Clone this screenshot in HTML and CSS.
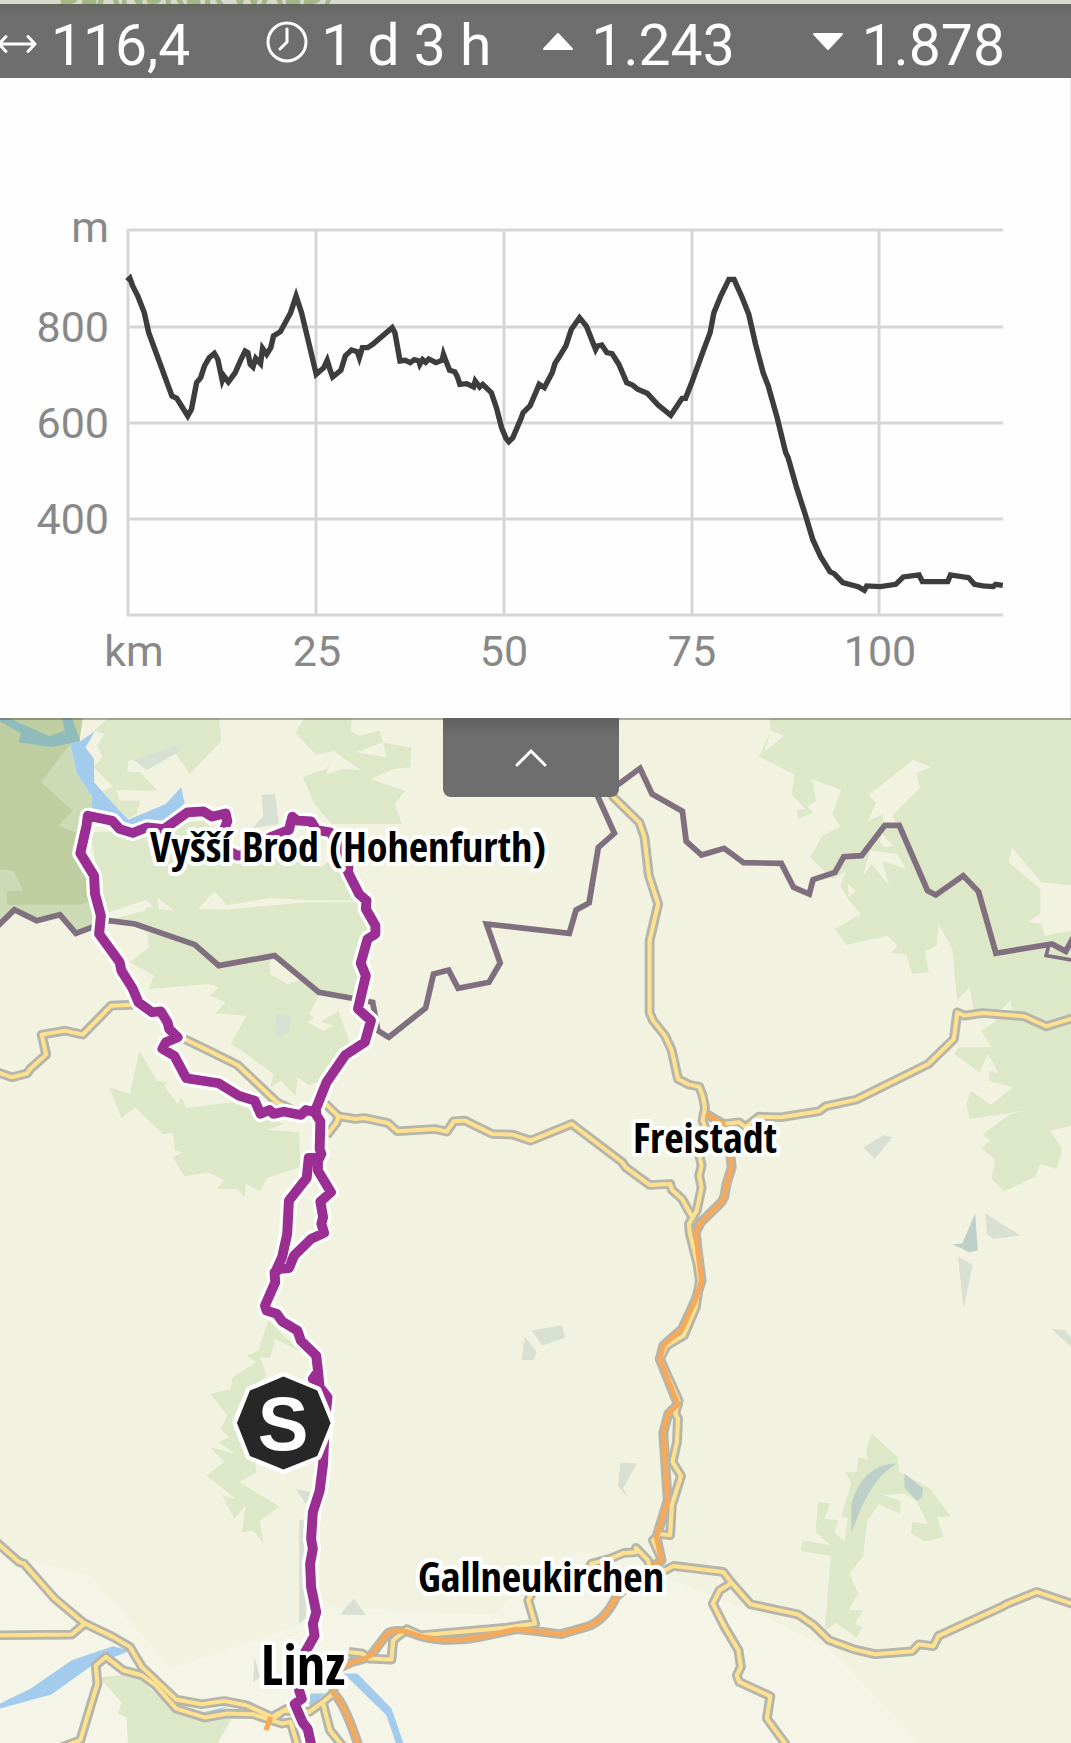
FILE: index.html
```html
<!DOCTYPE html>
<html lang="de">
<head>
    <meta charset="UTF-8">
    <meta name="viewport" content="width=device-width, initial-scale=1.0">
    <title>Tour</title>
    <link rel="stylesheet" href="styles.css">
</head>
<body>
    <div class="map-strip"><span>BLANSKER WALD/</span></div>

    <header class="stats">
      <div class="stat">
        <svg class="icon" viewBox="0 0 42 42"><path d="M3 23H39M10 15.500L3 23L10 30.500M32 15.500L39 23L32 30.500"/></svg>
        <span>116,4</span>
      </div>
      <div class="stat">
        <svg class="icon" viewBox="0 0 42 42"><circle cx="21" cy="21" r="19"/><path d="M21 8V21L14 28"/></svg>
        <span>1 d 3 h</span>
      </div>
      <div class="stat">
        <svg class="icon solid" viewBox="0 0 42 42"><path d="M21 13L35 28H7Z"/></svg>
        <span>1.243</span>
      </div>
      <div class="stat">
        <svg class="icon solid" viewBox="0 0 42 42"><path d="M7 13H35L21 28Z"/></svg>
        <span>1.878</span>
      </div>
    </header>

    <section class="profile">
      <svg viewBox="0 -1 1071 640">
        <g class="grid">
          <path d="M127 151H1003M128 248H1003M128 344H1003M128 440H1003M127 536H1003"/>
          <path d="M128 151V536M316 151V536M504 151V536M692 151V536M879 151V536"/>
        </g>
        <g class="y-labels">
          <text x="109" y="163">m</text>
          <text x="109" y="263">800</text>
          <text x="109" y="359">600</text>
          <text x="109" y="455">400</text>
        </g>
        <g class="x-labels">
          <text x="134" y="587">km</text>
          <text x="317" y="587">25</text>
          <text x="504" y="587">50</text>
          <text x="692" y="587">75</text>
          <text x="880" y="587">100</text>
        </g>
        <polyline class="elevation" transform="translate(0 122) scale(.3419 .3333)" points="372,240 380,232 388,255 403,285 422,335 435,395 460,465 485,535 503,585 517,592 549,645 560,625 575,545 587,530 598,495 612,470 627,457 637,475 650,538 655,525 668,543 688,515 705,475 717,450 725,455 732,490 740,498 748,472 762,488 768,442 780,460 792,440 800,405 820,392 850,335 866,285 882,335 925,520 947,500 957,478 965,505 973,528 997,508 1010,465 1028,447 1045,452 1051,470 1060,440 1075,440 1090,430 1147,380 1155,395 1170,480 1185,478 1200,485 1212,476 1225,480 1228,490 1236,476 1245,484 1254,474 1275,485 1293,478 1297,460 1302,474 1315,508 1330,512 1338,528 1345,550 1365,548 1385,558 1390,540 1403,558 1412,550 1437,575 1452,620 1467,680 1480,712 1488,722 1500,710 1525,650 1530,635 1550,615 1567,575 1577,550 1592,560 1615,515 1623,488 1640,460 1655,435 1671,385 1695,350 1715,375 1742,445 1747,435 1760,432 1775,455 1790,458 1810,490 1833,545 1850,552 1865,565 1893,577 1925,612 1962,643 1995,592 2005,592 2025,540 2055,455 2077,395 2088,335 2108,285 2132,235 2147,235 2170,288 2190,340 2210,430 2232,515 2247,555 2273,650 2298,755 2305,770 2330,860 2355,940 2377,1015 2400,1067 2428,1113 2440,1118 2465,1145 2510,1157 2528,1168 2535,1155 2575,1157 2620,1150 2642,1128 2688,1122 2698,1142 2772,1142 2780,1122 2833,1130 2850,1150 2875,1155 2905,1157 2912,1150 2933,1153"/>
      </svg>
    </section>

    <main class="map">
      <button class="map-toggle" type="button" aria-label="Profil schließen">
        <svg viewBox="0 0 32 20"><path d="M2 17L16 3L30 17"/></svg>
      </button>
      <svg class="map-canvas" viewBox="0 0 1071 1025">
        <defs>
          <!-- yellow roads, used for casing and fill -->
          <g id="roads">
            <path d="M-10 1114L35 1130L80 1118L88 1105L135 1062L122 1002L190 990L242 1002L325 915L390 912"/>
            <path d="M540 1015L610 1050L695 1093L810 1205L860 1230"/>
            <path d="M945 1202L990 1247L1040 1255L1065 1252L1135 1267L1162 1292L1272 1285L1307 1293L1327 1262L1360 1260L1440 1300L1500 1302L1552 1320L1672 1270L1820 1385L1830 1400L1900 1453L1960 1450L1965 1467L1995 1495L2023 1547"/>
            <path d="M990 1247L985 1265L955 1305"/>
            <path d="M1780 260L1795 290L1870 365L1885 410L1898 525L1925 610L1900 720V935L1910 960L1945 1005L1965 1050L1983 1135L2015 1152L2045 1158L2055 1185L2062 1220L2055 1260L2070 1300L2045 1360L2052 1395L2045 1425L2052 1460L2038 1530L2015 1570L2018 1600L2040 1690L2047 1740L2035 1820L2000 1905L1950 1935L1930 1975L1985 2100L1975 2139L1983 2154L1980 2224L1967 2284L1992 2326L1965 2414L1960 2504L1930 2500L1910 2519L1935 2575"/>
            <path d="M2065 1240L2115 1270L2162 1265L2180 1280L2220 1248L2285 1250L2395 1232L2415 1217L2505 1197L2715 1090L2790 1015L2800 935L2820 945L2875 937L2995 947L3060 977L3140 952"/>
            <path d="M1725 2600L1730 2589L1785 2574L1825 2557L1860 2555L1860 2542L1895 2579L1905 2610L1945 2609L1970 2596L2115 2614L2140 2647L2195 2711L2335 2742L2380 2774L2425 2819L2500 2847L2560 2861L2668 2852L2687 2831L2730 2837L2745 2806L2930 2719L2945 2710L3032 2674L3140 2711"/>
            <path d="M2140 2647L2105 2669L2085 2709L2120 2780L2160 2849L2167 2899L2155 2924L2162 2944L2253 2987L2243 3054L2300 3134"/>
            <path d="M-10 2525L55 2584L70 2589L160 2694L245 2767L330 2809L380 2839L415 2899L515 2997L590 3011L655 3001L720 3014L795 3049L840 3024L870 3014"/>
            <path d="M-10 2804L210 2802L248 2769"/>
            <path d="M180 3140L235 3119L270 2999L285 2949L280 2895L310 2869L360 2909L415 2924L455 2954L515 3024L600 3051L665 3039L740 3041L825 3069L850 3064L870 3134"/>
            <path d="M800 3055L830 3030L905 3034L945 3004L980 2974"/>
            <path d="M945 3009L965 3089L1005 3140"/>
            <path d="M1020 2854L1060 2859L1080 2874L1145 2877L1150 2819L1190 2786L1230 2804L1475 2782L1565 2769L1545 2699L1560 2670"/>
          </g>
          <g id="motorway">
            <path d="M2065 1240L2115 1270L2115 1310L2135 1350L2140 1400L2125 1450L2118 1490L2110 1505L2050 1565L2035 1595L2042 1660L2052 1740L2035 1795L1995 1885L1940 1935L1930 1975L1970 2079L1983 2111L1955 2139L1940 2197L1953 2399L1920 2509L1935 2579L1870 2625L1802 2689Q1770 2760 1715 2779L1640 2801L1565 2791L1510 2786L1400 2810Q1310 2828 1230 2807Q1165 2780 1135 2797L1085 2864Q1060 2880 1030 2884L980 2909L975 2979Q1005 3000 1050 3140"/>
          </g>
          <path id="route-line" d="M925 1235L895 1228L880 1243L830 1233L800 1240L788 1228L762 1240L745 1200L700 1186L640 1148L545 1133L510 1066L475 1045L485 1025L520 1010L495 985L490 965L470 932L445 935L405 905L387 862L355 810L350 785L290 700L295 645L278 580L275 525L235 458L253 375L257 345L328 360L350 385L388 397L430 380L480 385L548 335L595 332L620 348L660 338L665 362L650 400L650 440L695 465L745 455L790 410L845 388L855 348L870 360L910 362L925 388L965 395L1000 440L1020 480L1018 515L1050 580L1072 600L1070 625L1098 675V700L1075 715L1055 788L1070 825L1047 925L1085 960L1067 1025L1010 1063L955 1145L920 1235L937 1262L935 1345L940 1360L930 1380V1410L968 1475L937 1503L945 1550L940 1570L948 1597L910 1615L860 1665L845 1703L820 1705L803 1715L805 1745L775 1815L780 1830L810 1840L825 1862L870 1890L880 1920L925 1965L930 2010L935 2060L958 2090L950 2170L945 2289L935 2370L915 2435L910 2515L915 2545L907 2590L910 2660L925 2735L915 2770L920 2805L890 2860L870 2920L875 2970L883 2995L862 3010L885 3065L900 3085L912 3140M935 1372H903L897 1432L845 1500L840 1600L825 1670L805 1715M925 2020L915 2035L950 2085"/>
        </defs>

        <g transform="scale(.3419 .3333) translate(0 -52)">
          <path class="lowland" d="M0 2559L260 2624L500 2904L890 2769L950 2719L1450 2744L1570 2600L1700 2555L1900 2570L1965 2640L2240 2750L2430 2850L2700 3140H0Z"/>

          <!-- forests -->
          <g class="forest">
            <path d="M320 50H640L648 120L555 220L515 160L375 180L372 212L410 215L460 270L340 268L350 300L410 300L400 340L370 355L300 270L330 260L275 200L300 170L285 135L305 100L275 90Z"/>
            <path d="M890 50H1030L1025 90L1050 105L1110 90L1120 125L1203 142L1200 200L1150 205L1085 235L1185 270L1155 310L1175 370H970L920 310L885 228L955 205L980 150L925 162L865 98Z"/>
            <path d="M265 395L420 390L500 370L600 360L660 440L860 480L940 500L1000 450L1060 600L900 598L790 592L600 625L460 630L430 600L300 640Z"/>
            <path d="M320 655L430 620L680 625L900 605L1050 605L1098 690L1060 790L1040 890L930 875L805 760L640 795L570 732Z"/>
            <path d="M430 695L570 732L640 795L790 775V820L840 850L900 830L905 860L940 870L905 940L935 965L990 930L1030 1050L960 1130L905 1153L870 1130L865 1187L820 1140L790 1160L800 1120L720 1060L675 1030L720 945L630 938L660 905L615 885L640 860L610 850L435 865L450 825L380 785L435 740Z"/>
            <path d="M408 1050L460 1140L490 1145L480 1155L520 1210L530 1190L545 1222L680 1205L830 1270L780 1288L875 1295L878 1400L780 1432L760 1472L720 1450L715 1490L695 1465L635 1465L655 1440L610 1415L540 1428L505 1370L535 1355L512 1350L505 1297L475 1300L395 1220L355 1252L320 1160L380 1180Z"/>
            <path d="M785 1860L875 1950L805 1915L790 1972L760 1970L780 2025L720 2080L750 2315L700 2345L818 2418L760 2460L770 2525L740 2490L707 2495L718 2415L685 2455L650 2385L690 2395L603 2325L655 2285L615 2240L690 2260L640 2225L670 2210L645 2185L665 2145L615 2080L675 2065L680 2030L750 1985L722 1965L755 1950Z"/>
            <path d="M290 2930L400 2920L455 2980L600 3060L680 3050L630 3140H375L370 3050L345 3040L355 3005Z"/>
          </g>
          <g class="forest" transform="translate(1565 0)">
            <path d="M685 50H1570V1275L1505 1290L1543 1345L1525 1405L1478 1390L1462 1430L1370 1472L1335 1435L1345 1375L1305 1345L1330 1320L1310 1300L1390 1240L1435 1230L1270 1255L1262 1210L1275 1170L1333 1212L1398 1160L1328 1140V1110L1355 1118L1325 1060L1300 1115L1225 1060L1240 1040L1335 1040L1305 990L1350 960L1282 925L1270 860L1235 900L1220 745L1180 670L1175 735L1140 750L1152 815L1103 820L1085 760L1040 758L1060 735L1030 705L910 733L877 685L953 640L915 595L893 555L910 510L870 535L805 470L840 405L893 378L870 340L895 268L810 235L822 300L795 318L815 335L770 355L765 328L790 325L750 280L760 222L655 168L690 90Z"/>
            <path d="M985 2199L1060 2269L1065 2314L1155 2364L1215 2447L1175 2451L1195 2509L1140 2522L1100 2499L1102 2464L1148 2471L1115 2399L1080 2379L1020 2384L1068 2401V2439L1005 2412L970 2464L960 2566L920 2619L945 2679L917 2729L960 2729L935 2769L957 2779L940 2811L880 2767L847 2789L865 2566L778 2551L782 2519L865 2534L820 2494L828 2404L865 2409L845 2454L887 2459L875 2494L905 2524L915 2454L895 2447L925 2349L908 2314L940 2314L947 2269L975 2279L968 2249Z"/>
          </g>
          <g class="clearing">
            <path d="M955 222L975 150L1055 208L1000 205Z"/>
            <path d="M1043 155L1120 125L1130 170Z"/>
            <path d="M580 625L627 570L675 627Z"/>
            <path d="M460 590L510 632L465 625Z"/>
            <path d="M305 640L428 597L425 630L330 655Z"/>
            <path d="M900 965L950 930L930 960L975 975L945 990Z"/>
          </g>
          <g class="clearing" transform="translate(1565 0)">
            <path d="M975 283L1105 178L1158 200L1115 218L1125 262L1045 345L1060 375H1015L1018 340L973 362L998 305Z"/>
            <path d="M1395 440L1480 545L1570 555V690L1490 705L1478 668L1440 665L1478 640V565L1385 485Z"/>
            <path d="M980 450L1060 460L1085 505L1015 480L1035 555L985 490L960 525ZM1015 400L1047 435L1025 440L1008 425Z"/>
            <path d="M915 550L938 570L917 590Z"/>
            <path d="M690 90L728 105L670 155Z"/>
            <path d="M1390 900L1398 940L1350 940Z"/>
          </g>

          <!-- national park -->
          <path class="park" d="M0 50H242L232 122L205 130L225 218L270 290L268 330L245 400L225 460L280 600L275 680L222 695L175 642L107 660L42 627L0 670Z"/>
          <path class="park-core" d="M0 50H242L232 122L205 130L120 245L213 330L170 375L235 400L240 460L265 600L235 612H20V572L68 570L40 510L0 505Z"/>

          <!-- built-up areas -->
          <g class="town">
            <path d="M390 178L515 135L528 150L430 208Z"/>
            <path d="M765 283L805 280L815 370L740 382L770 345Z"/>
            <path d="M808 940L850 945L845 995L820 1010L805 1003Z"/>
            <path d="M865 2365L910 2375L895 2410ZM875 2460L895 2455V2750L875 2770Z"/>
            <path d="M1035 2694L1070 2744L995 2742Z"/>
            <path d="M745 2870L760 2930L740 2945Z"/>
            <path d="M1535 1908L1570 1955L1560 1978H1525ZM1555 1890L1643 1875L1653 1912L1585 1935Z"/>
          </g>
          <g class="town" transform="translate(1565 0)">
            <path d="M960 1340L1020 1303L1045 1310L993 1375Z"/>
            <path class="dense" d="M1287 1538L1295 1650L1270 1655L1245 1642L1220 1632L1250 1628Z"/>
            <path d="M1317 1538L1420 1605L1340 1615L1322 1600Z"/>
            <path d="M1237 1667L1280 1693L1253 1825Z"/>
            <path d="M1510 1885L1550 1888L1570 1915V1940Z"/>
            <path d="M250 2286L298 2289L258 2364L272 2391L242 2357Z"/>
            <path class="dense" d="M925 2499V2409Q960 2290 1058 2289Q980 2330 925 2499ZM1080 2319L1135 2364L1130 2394L1115 2400L1080 2359Z"/>
          </g>

          <!-- water -->
          <path class="lake" d="M0 50H20L145 107L190 90L180 50H210L235 122L150 140L55 125L60 98L0 62Z"/>
          <g class="water">
            <path d="M205 130L235 122L277 92L262 120L250 140L275 175V245L350 330L375 357L485 310L530 260L540 308L480 365L370 372L268 325L270 290L225 218Z"/>
            <path d="M0 3024V3009L90 2964L210 2879L330 2837L380 2850L360 2859L270 2894L150 2982Z"/>
            <path d="M1005 2919H1045L1145 3024L1182 3134H1160L1130 3044Z"/>
            <path d="M910 2979H950L910 3015L895 3005ZM595 3035L665 3018L625 3040Z"/>
          </g>

          <!-- state border -->
          <g class="border">
            <path d="M-10 680L42 627L107 660L175 642L222 698L320 660L395 670L570 732L640 795L803 765L933 875L1030 893L1090 905L1105 990L1137 1010L1245 922L1268 820L1312 808L1340 863L1430 845L1463 787L1423 670L1665 698L1685 628L1723 607L1750 440L1797 398L1745 280L1810 250L1872 203L1907 280L1996 332L2007 422L2052 463L2118 443L2175 486L2285 488L2321 560L2367 580L2378 537L2442 515L2468 468L2520 465L2588 374H2630L2713 570L2737 583L2817 525L2862 573L2913 758L3077 730L3117 752L3145 700"/>
            <path class="thin" d="M3067 735L3060 765L3145 780"/>
          </g>

          <use href="#roads" class="casing"/>
          <use href="#motorway" class="casing"/>
          <use href="#roads" class="road"/>
          <use href="#motorway" class="highway"/>
          <path class="highway" d="M778 3089L792 3049"/>

          <use href="#route-line" class="route-halo"/>
          <use href="#route-line" class="route"/>

          <path class="start" d="M829 2028L928 2070L967 2167L928 2266L829 2307L731 2266L693 2167L731 2070Z"/>
        </g>

        <text class="start-letter" x="283" y="732">S</text>
        <text class="place" x="348" y="144">Vyšší Brod (Hohenfurth)</text>
        <text class="place" x="705" y="435">Freistadt</text>
        <text class="place" x="541" y="874">Gallneukirchen</text>
        <text class="place city" x="303" y="967">Linz</text>
      </svg>
    </main>
</body>
</html>
```
FILE: styles.css
```css
* {
  box-sizing: border-box;
}

body {
  margin: 0;
  background-color: #f2f2e0;
  font-family: Roboto, "Liberation Sans", sans-serif;
  overflow-x: hidden;
}

svg {
  display: block;
  fill: none;
}

/* strip of map above the toolbar */
.map-strip {
  display: flex;
  align-items: flex-end;
  height: 4px;
  padding-left: 58px;
  overflow: hidden;
  background-color: #dadacc;
  color: #a3b884;
  font-family: "Noto Sans", sans-serif;
  font-size: 32px;
  font-weight: 700;
  line-height: 24px;
}

/* stats */
.stats {
  display: grid;
  grid-template-columns: repeat(4, 1fr);
  height: 74px;
  margin-left: -9px;
  margin-right: -1px;
  padding-top: 8px;
  background: linear-gradient(#666661, #6e6e6e 12px);
  color: #fff;
}

.stat {
  display: flex;
  align-items: center;
  gap: 13px;
  padding-left: 5px;
  font-size: 57px;
  line-height: 67px;
  white-space: nowrap;
}

.icon {
  width: 42px;
  height: 42px;
  margin-bottom: 8px;
  flex-shrink: 0;
  stroke: #fff;
  stroke-width: 3;
  stroke-linecap: round;
  stroke-linejoin: round;
}

.icon.solid {
  fill: #fff;
  stroke-width: 2;
}

/* elevation profile */
.profile {
  background: linear-gradient(#e4e4e4, #e4e4e4) right / 1px 100% no-repeat #fefefe;
}

.profile text {
  fill: #888;
  font-size: 43px;
}

.grid {
  stroke: #d6d6d6;
  stroke-width: 3;
}

.y-labels {
  text-anchor: end;
}

.x-labels {
  text-anchor: middle;
}

.elevation {
  stroke: #3d3d3d;
  stroke-width: 16;
}

/* map */
.map {
  position: relative;
  background-color: #f2f2e0;
}

.map::before {
  content: "";
  position: absolute;
  top: 0;
  left: 0;
  right: 0;
  height: 2px;
  background-color: rgba(80, 80, 70, 0.45);
}

.map-canvas {
  width: 100%;
}

.map-toggle {
  position: absolute;
  top: 0;
  left: calc(50% - 93px);
  display: flex;
  align-items: center;
  justify-content: center;
  width: 176px;
  height: 79px;
  padding: 0;
  border: 0;
  border-radius: 0 0 8px 8px;
  background: linear-gradient(#606060, #6e6e6e 20px);
}

.map-toggle svg {
  width: 32px;
  height: 20px;
  stroke: #fff;
  stroke-width: 3;
  stroke-linecap: round;
}

.lowland { fill: #f5f5e7; }
.forest { fill: #dde8c9; }
.clearing { fill: #f2f2e0; }
.park { fill: #cddab6; }
.park-core { fill: #bfcea0; }
.town { fill: #d8e0d4; }
.town .dense { fill: #bdcfc8; }
.water { fill: #a3cbee; }
.lake { fill: #90bbbb; }

.border {
  stroke: #806f7e;
  stroke-width: 17;
}

.border .thin {
  stroke-width: 11;
}

.casing, .road, .highway {
  stroke-linejoin: round;
}

.casing {
  stroke: #b5b5ab;
  stroke-width: 29;
}

.road {
  stroke: #fee18e;
  stroke-width: 12;
}

.highway {
  stroke: #f4a95b;
  stroke-width: 15;
}

.route, .route-halo {
  stroke-linecap: round;
  stroke-linejoin: round;
}

.route-halo {
  stroke: #fff;
  stroke-width: 48;
}

.route {
  stroke: #9b2e92;
  stroke-width: 29;
}

.start {
  fill: #272727;
  stroke: #fff;
  stroke-width: 26;
  stroke-linejoin: round;
  paint-order: stroke;
}

.start-letter {
  fill: #fff;
  font-family: "Liberation Sans", Arial, sans-serif;
  font-size: 76px;
  font-weight: 700;
  text-anchor: middle;
}

.place {
  fill: #000;
  stroke: #fff;
  stroke-width: 8;
  stroke-linejoin: round;
  paint-order: stroke;
  font-family: "Open Sans Condensed", "Noto Sans", sans-serif;
  font-size: 42px;
  font-weight: 700;
  text-anchor: middle;
}

.place.city {
  font-size: 56px;
}
```
